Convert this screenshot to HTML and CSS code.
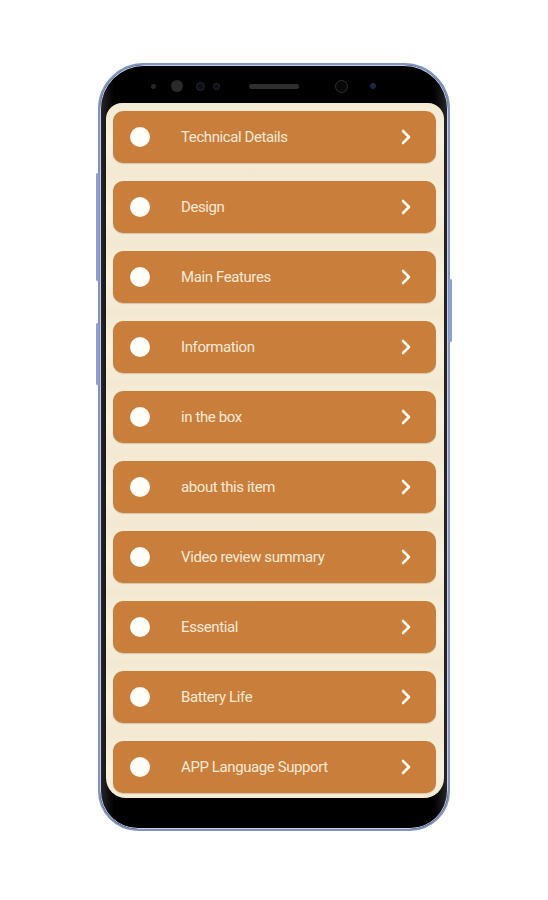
FILE: index.html
```html
<!DOCTYPE html>
<html lang="en">
<head>
    <meta charset="UTF-8">
    <meta name="viewport" content="width=device-width, initial-scale=1.0">
    <title>Phone Guide</title>
    <link rel="stylesheet" href="styles.css">
</head>
<body>
	<div class="stage">
	    <div class="phone">
		<span class="side-btn left-1"></span>
		<span class="side-btn left-2"></span>
		<span class="side-btn right-1"></span>
		<div class="bezel-top">
		    <span class="dot dot-small"></span>
		    <span class="dot dot-big"></span>
		    <span class="dot dot-ring"></span>
		    <span class="dot dot-ring small"></span>
		    <span class="speaker"></span>
		    <span class="dot cam"></span>
		    <span class="dot lens"></span>
		</div>
		<div class="screen">
		    <div class="menu-item"><span class="bullet"></span><span class="label">Technical Details</span><svg class="chev" viewBox="0 0 10 16"><path d="M2 2l6 6-6 6"/></svg></div>
		    <div class="menu-item"><span class="bullet"></span><span class="label">Design</span><svg class="chev" viewBox="0 0 10 16"><path d="M2 2l6 6-6 6"/></svg></div>
		    <div class="menu-item"><span class="bullet"></span><span class="label">Main Features</span><svg class="chev" viewBox="0 0 10 16"><path d="M2 2l6 6-6 6"/></svg></div>
		    <div class="menu-item"><span class="bullet"></span><span class="label">Information</span><svg class="chev" viewBox="0 0 10 16"><path d="M2 2l6 6-6 6"/></svg></div>
		    <div class="menu-item"><span class="bullet"></span><span class="label">in the box</span><svg class="chev" viewBox="0 0 10 16"><path d="M2 2l6 6-6 6"/></svg></div>
		    <div class="menu-item"><span class="bullet"></span><span class="label">about this item</span><svg class="chev" viewBox="0 0 10 16"><path d="M2 2l6 6-6 6"/></svg></div>
		    <div class="menu-item"><span class="bullet"></span><span class="label">Video review summary</span><svg class="chev" viewBox="0 0 10 16"><path d="M2 2l6 6-6 6"/></svg></div>
		    <div class="menu-item"><span class="bullet"></span><span class="label">Essential</span><svg class="chev" viewBox="0 0 10 16"><path d="M2 2l6 6-6 6"/></svg></div>
		    <div class="menu-item"><span class="bullet"></span><span class="label">Battery Life</span><svg class="chev" viewBox="0 0 10 16"><path d="M2 2l6 6-6 6"/></svg></div>
		    <div class="menu-item"><span class="bullet"></span><span class="label">APP Language Support</span><svg class="chev" viewBox="0 0 10 16"><path d="M2 2l6 6-6 6"/></svg></div>
		</div>
	    </div>
	</div>
</body>
</html>
```

FILE: styles.css
```css
	body {
	    margin: 0;
	    background: #ffffff;
	    font-family: Roboto, "Liberation Sans", sans-serif;
	}
	.stage {
	    display: flex;
	    justify-content: center;
	    padding-top: 63px;
	}
	.phone {
	    position: relative; /* for the side buttons */
	    width: 352px;
	    height: 768px;
	    box-sizing: border-box;
	    border: 2px solid #8193c2;
	    border-radius: 46px 46px 40px 40px;
	    background: linear-gradient(90deg, #2a2a2a 0%, #000 4%, #000 96%, #2a2a2a 100%);
	    box-shadow: inset 0 0 0 1px #c6cfe4;
	    padding: 38px 4px 31px 6px;
	    display: flex;
	    flex-direction: column;
	}
	.side-btn {
	    position: absolute;
	    width: 3px;
	    background: #8d9fcf;
	    border-radius: 2px;
	}
	.left-1 { left: -4px; top: 108px; height: 108px; }
	.left-2 { left: -4px; top: 258px; height: 62px; }
	.right-1 { right: -4px; top: 214px; height: 63px; }

	.bezel-top {
	    position: absolute;
	    top: 14px;
	    left: 0;
	    right: 0;
	    height: 14px;
	    display: flex;
	    align-items: center;
	    padding-left: 51px;
	}
	.dot {
	    display: block;
	    border-radius: 50%;
	    background: #1c1c1c;
	}
	.dot-small { width: 5px; height: 5px; background: #262626; }
	.dot-big { width: 12px; height: 12px; margin-left: 15px; background: #2a2a2a; }
	.dot-ring { width: 7px; height: 7px; margin-left: 13px; background: #0d0d14; border: 1px solid #24263a; }
	.dot-ring.small { width: 5px; height: 5px; margin-left: 8px; }
	.speaker {
	    width: 50px;
	    height: 5px;
	    border-radius: 3px;
	    background: #2e2e2e;
	    margin-left: 29px;
	}
	.cam { width: 11px; height: 11px; margin-left: 36px; background: #080808; border: 1px solid #2e2e2e; }
	.lens { width: 6px; height: 6px; margin-left: 22px; background: #1e2444; }

	.screen {
	    flex: 1;
	    border-radius: 16px 16px 20px 20px;
	    background:
	        repeating-linear-gradient(180deg, #f3e9d2 0px, #f8f1e1 35px, #f3e9d2 70px);
	    padding: 8px 8px 0 7px;
	    display: flex;
	    flex-direction: column;
	    gap: 18px;
	    overflow: hidden;
	}
	.menu-item {
	    height: 52px;
	    flex-shrink: 0;
	    border-radius: 10px;
	    background: #c97e3b;
	    display: flex;
	    align-items: center;
	    padding: 0 25px 0 17px;
	    box-shadow: 0 1px 1px rgba(120, 80, 30, 0.25);
	}
	.bullet {
	    width: 20px;
	    height: 20px;
	    border-radius: 50%;
	    background: #fffdf8;
	}
	.label {
	    flex: 1;
	    margin-left: 31px;
	    color: #f6e9d6;
	    font-size: 15px;
	    letter-spacing: -0.4px;
	}
	.chev {
	    width: 10px;
	    height: 16px;
	}
	.chev path {
	    fill: none;
	    stroke: #fffaf0;
	    stroke-width: 2.6;
	    stroke-linecap: round;
	    stroke-linejoin: round;
	}
```
